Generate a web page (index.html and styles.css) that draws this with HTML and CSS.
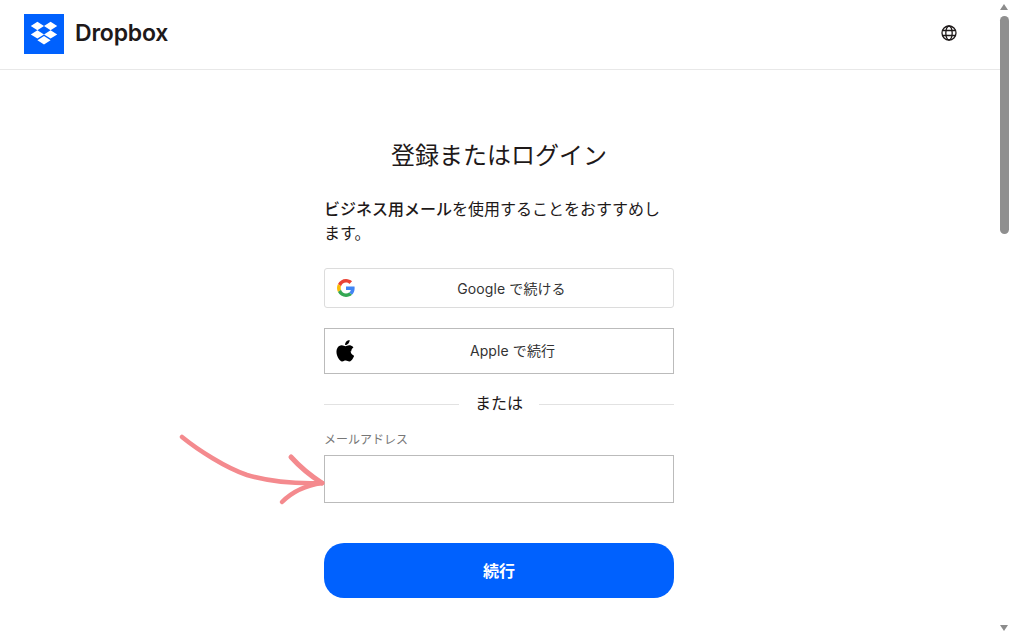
FILE: index.html
```html
<!DOCTYPE html>
<html lang="ja">
<head>
    <meta charset="UTF-8">
    <meta name="viewport" content="width=device-width, initial-scale=1.0">
    <title>Dropbox</title>
    <link rel="stylesheet" href="styles.css">
</head>
<body>
    <div class="page">
        <div class="content">
            <header class="topbar">
                <div class="brand">
                    <span class="brand-mark">
                        <svg width="28" height="26" viewBox="0 0 28 26">
                            <path fill="#fff" d="M7.4 0.8 14 5 7.4 9.2 0.8 5zM20.6 0.8 27.2 5 20.6 9.2 14 5zM0.8 13.4 7.4 9.2 14 13.4 7.4 17.6zM20.6 9.2 27.2 13.4 20.6 17.6 14 13.4zM7.4 19.2 14 15 20.6 19.2 14 23.4z"/>
                        </svg>
                    </span>
                    <span class="brand-name">Dropbox</span>
                </div>
                <svg class="globe" width="16" height="16" viewBox="0 0 16 16" fill="none" stroke="#1e1919" stroke-width="1.3">
                    <circle cx="8" cy="8" r="7"/>
                    <ellipse cx="8" cy="8" rx="3.2" ry="7"/>
                    <path d="M1.5 5.5h13M1.5 10.5h13"/>
                </svg>
            </header>

            <main class="login">
                <h1>登録またはログイン</h1>
                <p class="hint"><strong>ビジネス用メール</strong>を使用することをおすすめします。</p>

                <button class="social social-google">
                    <svg class="social-icon" width="18" height="18" viewBox="0 0 48 48">
                        <path fill="#EA4335" d="M24 9.5c3.5 0 6.7 1.2 9.2 3.6l6.9-6.9C35.9 2.4 30.5 0 24 0 14.6 0 6.5 5.4 2.6 13.2l8 6.2C12.5 13.7 17.8 9.5 24 9.5z"/>
                        <path fill="#4285F4" d="M47 24.5c0-1.6-.1-3.100-.4-4.500H24v9h12.900c-.6 3-2.200 5.500-4.700 7.200l7.700 6c4.500-4.200 7.100-10.300 7.100-17.700z"/>
                        <path fill="#FBBC05" d="M10.600 28.600c-.5-1.400-.8-3-.8-4.600s.3-3.200.8-4.600l-8-6.200C.9 16.500 0 20.100 0 24s.9 7.500 2.600 10.800l8-6.200z"/>
                        <path fill="#34A853" d="M24 48c6.500 0 11.900-2.100 15.900-5.800l-7.700-6c-2.200 1.400-4.900 2.300-8.200 2.300-6.200 0-11.500-4.200-13.400-9.900l-8 6.200C6.500 42.600 14.600 48 24 48z"/>
                    </svg>
                    <span>Google で続ける</span>
                </button>

                <button class="social social-apple">
                    <svg class="social-icon" width="19" height="22" viewBox="1.500 2 17.500 20.500" preserveAspectRatio="none">
                        <path fill="#000" d="M16.400 12.700c0-2.500 2-3.700 2.100-3.800-1.200-1.700-3-1.900-3.600-2-1.500-.2-3 .9-3.800.9s-2-.9-3.300-.9c-1.700 0-3.300 1-4.100 2.500-1.800 3-.5 7.600 1.200 10.100.9 1.200 1.900 2.600 3.200 2.500 1.300-.1 1.800-.8 3.300-.8s2 .8 3.300.8c1.400 0 2.300-1.200 3.100-2.500 1-1.400 1.400-2.800 1.400-2.900-.1 0-3.300-1.200-3.300-4.400zM13.900 5.300c.7-.9 1.200-2.100 1-3.300-1 0-2.300.7-3 1.500-.7.800-1.200 2-1.100 3.200 1.200.1 2.400-.6 3.100-1.400z"/>
                    </svg>
                    <span>Apple で続行</span>
                </button>

                <div class="divider"><span>または</span></div>

                <label class="field-label" for="email">メールアドレス</label>
                <input class="field-input" id="email" type="text">

                <button class="submit">続行</button>

                <svg class="arrow" width="160" height="90" viewBox="0 0 160 90" fill="none" stroke="#f48a8e" stroke-linecap="round" stroke-linejoin="round">
                    <path stroke-width="4.500" d="M4 5C20 18 48 36 69 43c20 6 44 9 75 8"/>
                    <path stroke-width="5" d="M113 25c9 10 20 19 31 26"/>
                    <path stroke-width="4.500" d="M144 51c-14 2-29 8-40 19"/>
                </svg>
            </main>
        </div>

        <aside class="scrollbar">
            <span class="scroll-up"></span>
            <span class="scroll-thumb"></span>
            <span class="scroll-down"></span>
        </aside>
    </div>
</body>
</html>
```

FILE: styles.css
```css
/* General */
html, body {
    margin: 0;
    padding: 0;
    height: 100%;
    overflow: hidden;
    background: #fff;
}

body {
    font-family: Inter, "Noto Sans CJK JP", "Noto Sans", sans-serif;
    color: #1e1919;
}

.page {
    display: flex;
    height: 637px;
}

.content {
    flex: 1;
    min-width: 0;
}

/* Header */
.topbar {
    height: 55px;
    border-bottom: 1px solid #e8e8e8;
    margin-right: -9px;
    padding: 14px 42px 0 24px;
    display: flex;
    justify-content: space-between;
    align-items: flex-start;
}

.brand {
    display: flex;
    align-items: center;
    gap: 11px;
}

.brand-mark {
    width: 40px;
    height: 40px;
    background: #0061fe;
    display: flex;
    align-items: center;
    justify-content: center;
}

.brand-name {
    margin-bottom: 2px;
    font-size: 23px;
    font-weight: 600;
    letter-spacing: -0.2px;
}

.globe {
    margin: 11px 10px 0 0;
}

/* Login column */
.login {
    position: relative;
    width: 350px;
    margin: 0 auto;
    left: -1px;
    padding-top: 70px;
}

.login h1 {
    margin: 0;
    font-size: 24px;
    line-height: 32px;
    font-weight: 400;
    text-align: center;
}

.hint {
    margin: 25px 0 0;
    font-size: 16px;
    line-height: 24px;
}

.hint strong {
    font-weight: 500;
}

/* Buttons */
.social {
    position: relative;
    display: flex;
    width: 100%;
    align-items: center;
    justify-content: center;
    background: #fff;
    font-family: inherit;
    font-size: 14px;
    letter-spacing: 0.1px;
    color: #333;
    padding: 0;
    box-sizing: border-box;
}

.social-icon {
    position: absolute;
    top: 50%;
    transform: translateY(-50%);
}

.social-google {
    height: 40px;
    margin-top: 23px;
    border: 1px solid #dcdcdc;
    border-radius: 3px;
    padding-left: 25px;
}

.social-google .social-icon {
    left: 12px;
}

.social-apple {
    height: 46px;
    margin-top: 20px;
    border: 1px solid #bbb;
    border-radius: 0;
    padding: 0 0 2px 27px;
}

.social-apple .social-icon {
    left: 10px;
}

.divider {
    display: flex;
    align-items: center;
    gap: 16px;
    margin-top: 17px;
    height: 22px;
    font-size: 16px;
}

.divider::before,
.divider::after {
    content: "";
    flex: 1;
    margin-top: 5px;
    border-top: 1px solid #e2e2e2;
}

/* Email field */
.field-label {
    display: block;
    margin-top: 19px;
    font-size: 12px;
    line-height: 16px;
    color: #777;
}

.field-input {
    display: block;
    width: 100%;
    height: 48px;
    margin-top: 7px;
    box-sizing: border-box;
    border: 1px solid #bbb;
    border-radius: 0;
    outline: none;
}

.submit {
    display: block;
    width: 100%;
    height: 55px;
    margin-top: 40px;
    padding: 0 0 2px;
    border: none;
    border-radius: 20px;
    background: #0061fe;
    color: #fff;
    font-family: inherit;
    font-size: 16px;
    font-weight: 700;
}

/* Hand drawn arrow lying over the page */
.arrow {
    position: absolute;
    left: -146px;
    top: 362px;
}

/* Scrollbar */
.scrollbar {
    position: relative;
    width: 9px;
    background: #fff;
}

.scroll-up,
.scroll-down {
    position: absolute;
    left: 0;
    width: 0;
    height: 0;
    border-left: 4.5px solid transparent;
    border-right: 4.5px solid transparent;
}

.scroll-up {
    top: 4px;
    border-bottom: 6px solid #8c8c8c;
}

.scroll-down {
    top: 625px;
    border-top: 6px solid #8c8c8c;
}

.scroll-thumb {
    position: absolute;
    top: 16px;
    left: 0;
    width: 9px;
    height: 218px;
    border-radius: 5px;
    background: #8f8f8f;
}
```
